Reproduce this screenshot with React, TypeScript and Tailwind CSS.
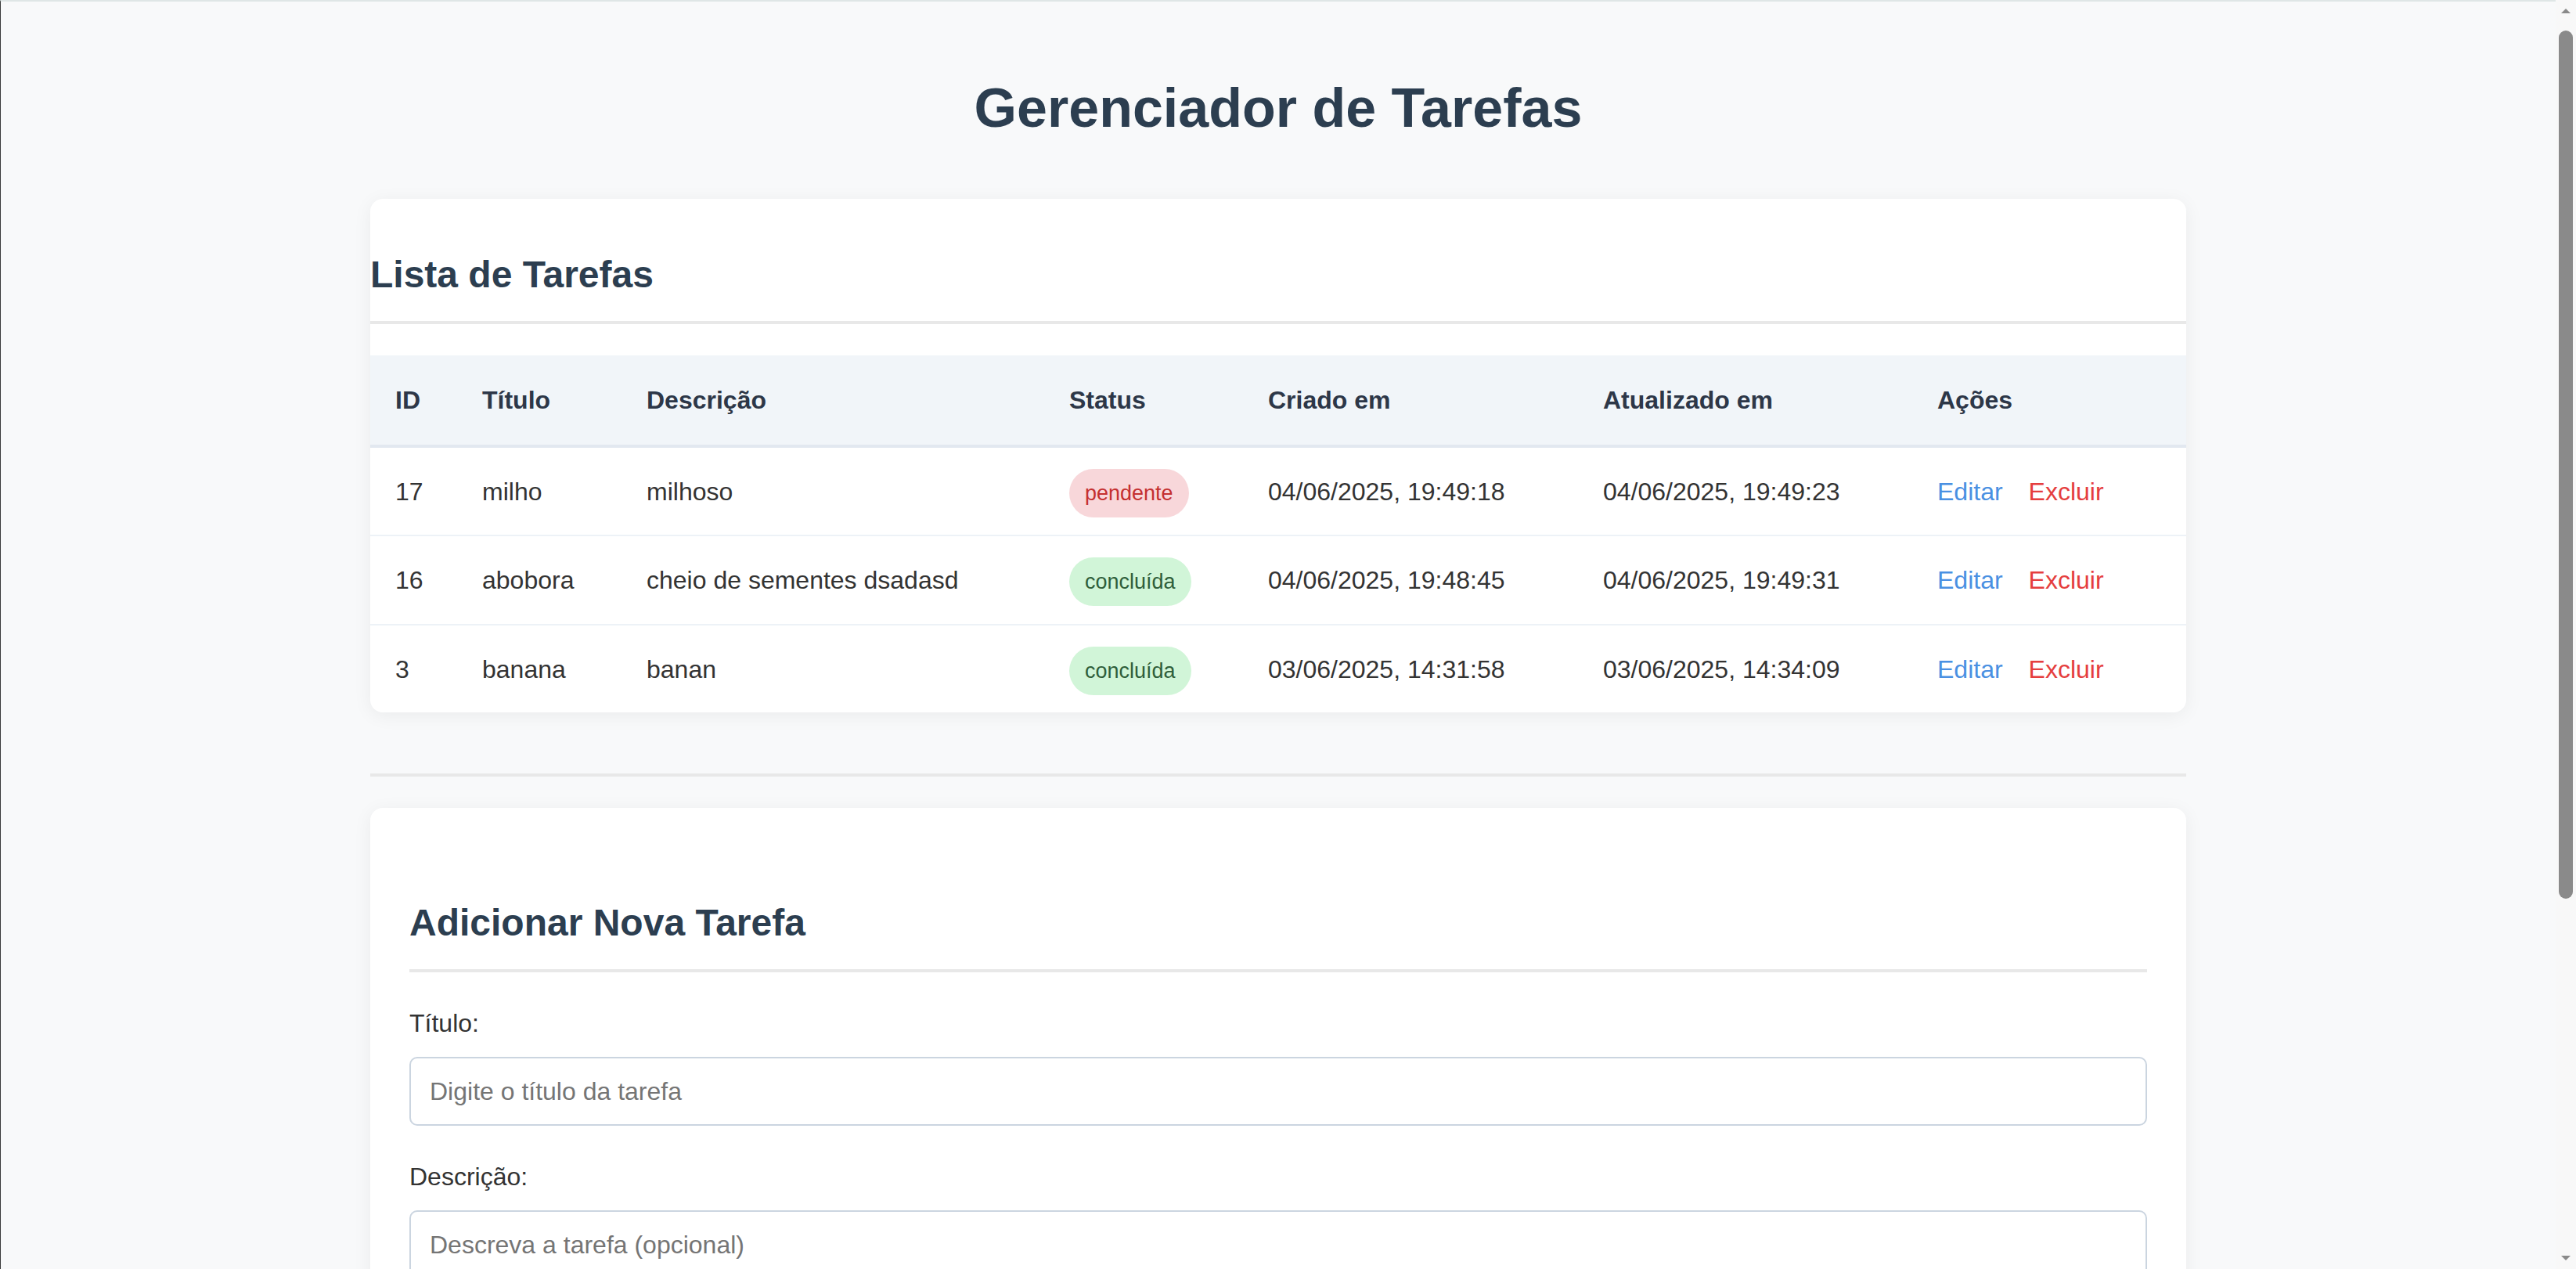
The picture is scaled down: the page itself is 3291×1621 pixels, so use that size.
import React from "react";

type Task = {
  id: number;
  titulo: string;
  descricao: string;
  status: "pendente" | "concluída";
  criado: string;
  atualizado: string;
};

const tasks: Task[] = [
  { id: 17, titulo: "milho", descricao: "milhoso", status: "pendente", criado: "04/06/2025, 19:49:18", atualizado: "04/06/2025, 19:49:23" },
  { id: 16, titulo: "abobora", descricao: "cheio de sementes dsadasd", status: "concluída", criado: "04/06/2025, 19:48:45", atualizado: "04/06/2025, 19:49:31" },
  { id: 3, titulo: "banana", descricao: "banan", status: "concluída", criado: "03/06/2025, 14:31:58", atualizado: "03/06/2025, 14:34:09" },
];

function Badge({ status }: { status: Task["status"] }) {
  if (status === "pendente") {
    return (
      <span className="inline rounded-full bg-[#f8d7da] px-[20px] py-[16px] text-[27px] leading-[30px] text-[#c53030]">
        pendente
      </span>
    );
  }
  return (
    <span className="inline rounded-full bg-[#d1f5d8] px-[20px] py-[16px] text-[27px] leading-[30px] text-[#2f5e3a]">
      concluída
    </span>
  );
}

function FakeScrollbar() {
  return (
    <div className="fixed top-0 right-0 flex h-screen w-[26px] flex-col items-center bg-[#f8f8f8]">
      <svg width="18" height="12" viewBox="0 0 18 12" className="mt-[8px]">
        <path d="M9 3 L15 9 L3 9 Z" fill="#8a8a8a" />
      </svg>
      <div className="mt-[19px] h-[1109px] w-[18px] rounded-full bg-[#8a8a8a]" />
      <div className="flex-1" />
      <svg width="18" height="12" viewBox="0 0 18 12" className="mb-[8px]">
        <path d="M3 3 L15 3 L9 9 Z" fill="#8a8a8a" />
      </svg>
    </div>
  );
}

const th = "h-[116px] px-[32px] py-0 font-bold";

export default function App() {
  return (
    <div className="min-h-screen border-l border-l-[#3a3a3a] border-t-2 border-t-[#dfe6e6] bg-[#f8f9fa] pr-[26px] font-['Liberation_Sans',Arial,sans-serif] text-[#333]">
      <div className="mx-auto w-[2320px] pb-[80px]">
        <h1 className="pt-[96px] text-center text-[70px] font-bold leading-[80px] text-[#2c3e50]">
          Gerenciador de Tarefas
        </h1>

        <section className="mt-[76px] overflow-hidden rounded-[16px] bg-white shadow-[0_4px_24px_rgba(0,0,0,0.06)]">
          <h2 className="mt-[69px] border-b-4 border-[#e8e8e8] pb-[32px] text-[48px] font-bold leading-[55px] text-[#2c3e50]">
            Lista de Tarefas
          </h2>
          <table className="mt-[40px] w-full table-fixed border-collapse text-left text-[32px] leading-[48px]">
            <colgroup>
              <col className="w-[111px]" />
              <col className="w-[210px]" />
              <col className="w-[540px]" />
              <col className="w-[254px]" />
              <col className="w-[428px]" />
              <col className="w-[427px]" />
              <col className="w-[350px]" />
            </colgroup>
            <thead>
              <tr className="border-b-4 border-[#e2e8f0] bg-[#f1f5f9] text-[#2d3748]">
                <th className={th}>ID</th>
                <th className={th}>Título</th>
                <th className={th}>Descrição</th>
                <th className={th}>Status</th>
                <th className={th}>Criado em</th>
                <th className={th}>Atualizado em</th>
                <th className={th}>Ações</th>
              </tr>
            </thead>
            <tbody>
              {tasks.map((t, i) => {
                const last = i === tasks.length - 1;
                const td = last
                  ? "h-[112px] whitespace-nowrap px-[32px] py-0"
                  : "h-[114px] whitespace-nowrap px-[32px] py-0";
                return (
                  <tr key={t.id} className={last ? "" : "border-b-2 border-[#edf2f7]"}>
                    <td className={td}>{t.id}</td>
                    <td className={td}>{t.titulo}</td>
                    <td className={td}>{t.descricao}</td>
                    <td className={td}>
                      <Badge status={t.status} />
                    </td>
                    <td className={td}>{t.criado}</td>
                    <td className={td}>{t.atualizado}</td>
                    <td className={td}>
                      <span className="mr-[33px] cursor-pointer text-[#4a90e2]">Editar</span>
                      <span className="cursor-pointer text-[#e53e3e]">Excluir</span>
                    </td>
                  </tr>
                );
              })}
            </tbody>
          </table>
        </section>

        <hr className="mt-[78px] mb-[40px] border-t-4 border-[#e8e8e8]" />

        <section className="rounded-[16px] bg-white p-[50px] shadow-[0_4px_24px_rgba(0,0,0,0.06)]">
          <h2 className="mt-[69px] border-b-4 border-[#e8e8e8] pb-[32px] text-[48px] font-bold leading-[55px] text-[#2c3e50]">
            Adicionar Nova Tarefa
          </h2>
          <form className="flex flex-col">
            <label className="mt-[47px] mb-[24px] block text-[32px] leading-[37px] text-[#333]">Título:</label>
            <input
              type="text"
              placeholder="Digite o título da tarefa"
              className="h-[88px] w-full rounded-[10px] border-2 border-[#cbd5e0] bg-white px-[24px] py-[24px] text-[32px] leading-[36px] text-[#333] placeholder:text-[#757575]"
            />
            <label className="mt-[47px] mb-[24px] block text-[32px] leading-[37px] text-[#333]">Descrição:</label>
            <textarea
              rows={4}
              placeholder="Descreva a tarefa (opcional)"
              className="h-[196px] w-full resize-y rounded-[10px] border-2 border-[#cbd5e0] bg-white px-[24px] py-[24px] text-[32px] leading-[36px] text-[#333] placeholder:text-[#757575]"
            />
            <label className="mt-[47px] mb-[24px] block text-[32px] leading-[37px] text-[#333]">Status:</label>
            <select className="h-[88px] w-full rounded-[10px] border-2 border-[#cbd5e0] bg-white px-[24px] text-[32px] text-[#333]">
              <option>pendente</option>
              <option>concluída</option>
            </select>
            <button
              type="button"
              className="mt-[48px] h-[88px] w-full rounded-[10px] bg-[#4a90e2] text-[32px] font-bold text-white"
            >
              Adicionar Tarefa
            </button>
          </form>
        </section>
      </div>
      <FakeScrollbar />
    </div>
  );
}
